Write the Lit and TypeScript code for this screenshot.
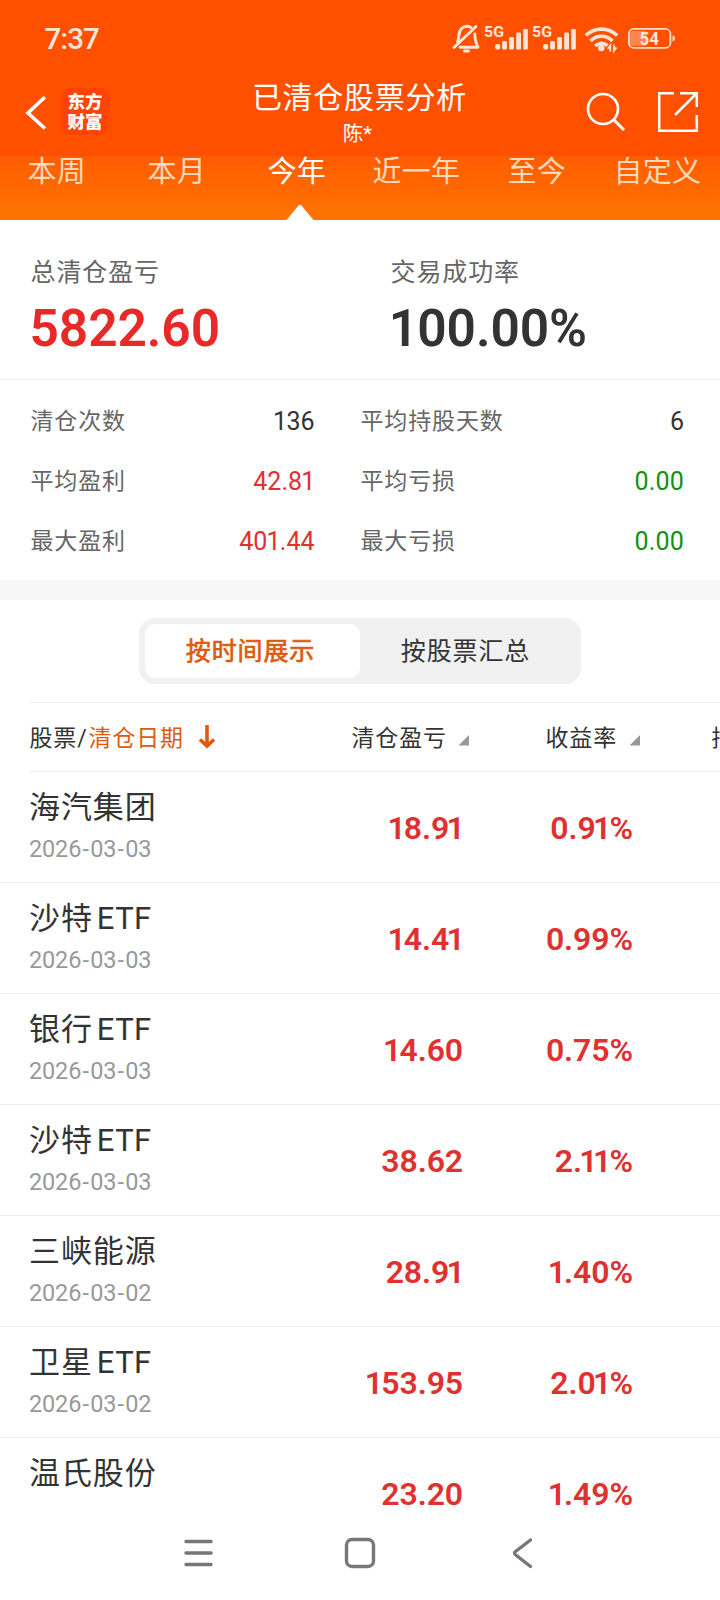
import { LitElement, html, css, svg } from "lit";
import { customElement } from "lit/decorators.js";

interface Trade { name: string; suffix?: string; date: string; profit: string; rate: string; }

const TRADES: Trade[] = [
  { name: "海汽集团", date: "2026-03-03", profit: "18.91", rate: "0.91%" },
  { name: "沙特", suffix: "ETF", date: "2026-03-03", profit: "14.41", rate: "0.99%" },
  { name: "银行", suffix: "ETF", date: "2026-03-03", profit: "14.60", rate: "0.75%" },
  { name: "沙特", suffix: "ETF", date: "2026-03-03", profit: "38.62", rate: "2.11%" },
  { name: "三峡能源", date: "2026-03-02", profit: "28.91", rate: "1.40%" },
  { name: "卫星", suffix: "ETF", date: "2026-03-02", profit: "153.95", rate: "2.01%" },
  { name: "温氏股份", date: "", profit: "23.20", rate: "1.49%" },
];

const STATS = [
  ["清仓次数", "136", "", "平均持股天数", "6", ""],
  ["平均盈利", "42.81", "up", "平均亏损", "0.00", "down"],
  ["最大盈利", "401.44", "up", "最大亏损", "0.00", "down"],
];

const TABS = ["本周", "本月", "今年", "近一年", "至今", "自定义"];

// Tightens the narrow figure "1" against its neighbours.
const figures = (text: string) =>
  [...text].map((c) => (c === "1" ? html`<span class="one">1</span>` : c));

const signal = (x: number) => svg`
  <g fill="#ffe6d8">
    <rect x=${x} y="34" width="5" height="5.6" rx="1.8"/>
    <rect x=${x + 7} y="31" width="4.8" height="8.6" rx="1.6"/>
    <rect x=${x + 14} y="27" width="4.8" height="12.6" rx="1.6"/>
    <rect x=${x + 21} y="22.5" width="4.8" height="17.1" rx="1.4"/>
    <rect x=${x + 28} y="19" width="4.6" height="20.6" rx="1"/>
  </g>`;

@customElement("app-root")
export class AppRoot extends LitElement {
  static styles = css`
    :host { display: block; width: 720px; height: 1600px; overflow: hidden; background: #fff;
      font-family: Roboto, "Noto Sans CJK SC", sans-serif; color: #333; }
    * { box-sizing: border-box; }
    .screen { display: flex; flex-direction: column; height: 1600px; white-space: nowrap; }
    .top { background: #ff5000; height: 156px; color: #fff; flex: none; }
    .status { height: 76px; display: flex; justify-content: space-between; padding-left: 44.5px; }
    .clock { font-size: 29.5px; line-height: 79px; font-weight: 500; color: #ffe6d8; letter-spacing: -0.9px; }
    .icons { width: 270px; height: 60px; padding-top: 10px; flex: none; }
    .icons svg { display: block; }
    .bar { height: 80px; display: grid; grid-template-columns: 240px 1fr 240px; }
    .left { display: flex; align-items: flex-start; padding: 12px 0 0 24px; }
    .back { margin: 7px 0 0 0; }
    .logo { margin-left: 13px; width: 48px; height: 47px; border-radius: 9px; background: #ff4405; padding: 3px 0 0 6.5px;
      font: 900 17.5px/20px "Noto Sans CJK SC", sans-serif; }
    .titles { display: flex; flex-direction: column; align-items: center; }
    .title { font-size: 30px; letter-spacing: 0.75px; line-height: 44px; margin-left: -1px; }
    .user { font-size: 20.5px; line-height: 26px; margin: 1px 5px 0 0; }
    .right { padding: 14px 0 0 106px; }
    .tabs { flex: none; height: 64px; background: linear-gradient(#ff5c00, #ff7400); position: relative;
      display: grid; grid-template-columns: 120px 120px 105px 135px 106px auto; padding: 1px 0 0 27.5px;
      font-size: 29px; letter-spacing: 0.2px; line-height: 30px; color: #ffd9b8; }
    .active { color: #fff; }
    .pointer { position: absolute; left: 286px; bottom: 0; }
    .summary { flex: none; height: 160px; border-bottom: 1px solid #ececec; display: grid;
      grid-template-columns: 360px 360px; padding: 34px 0 0 30.5px; }
    .caption { font-size: 25px; letter-spacing: 0.9px; line-height: 38px; color: #666; }
    .big { font-size: 51.5px; line-height: 73px; font-weight: 600; letter-spacing: -0.1px; margin-left: -1px; }
    .big.total { color: #e92828; }
    .stats { flex: none; height: 200px; padding: 12px 36px 0 30.5px; display: flex; flex-direction: column; }
    .stat-row { height: 60px; display: grid; grid-template-columns: 284px 1fr; column-gap: 46px; }
    .stat { display: flex; justify-content: space-between; line-height: 60px; color: #666; font-size: 23px; letter-spacing: 0.85px; }
    .num { font-size: 25px; color: #333; letter-spacing: 0; }
    .up { color: #e03030; }
    .down { color: #109010; letter-spacing: 0.2px; }
    .gap { flex: none; height: 20px; background: #f7f7f7; }
    .switch { flex: none; width: 442px; height: 66px; margin: 18px 0 0 139px; border-radius: 16px; background: #f1f1f1;
      padding: 6px; display: grid; grid-template-columns: 215px 1fr; }
    .choice { text-align: center; font-size: 25px; letter-spacing: 0.85px; line-height: 55px; height: 54px; border-radius: 11px; }
    .choice:last-child { padding-right: 4px; }
    .chosen { background: #fff; color: #df5a0c; -webkit-text-stroke: 0.7px #df5a0c; padding-right: 4px; }
    .head { flex: none; height: 70px; margin: 18px 0 0 29px; border-top: 1px solid #ececec; border-bottom: 1px solid #ececec;
      display: grid; grid-template-columns: 322.5px 194px 166px 120px; line-height: 70px; font-size: 23px; letter-spacing: 0.85px; overflow: hidden; }
    .cell { display: flex; align-items: center; height: 70px; padding-top: 1px; }
    .cell:first-child { padding-left: 0.5px; }
    .sorted { color: #df5a0c; margin-left: 1px; }
    .arrow { margin: -5px 0 0 14px; }
    .sort { margin: 2px 0 0 11.5px; }
    .rows { flex: 1; min-height: 0; overflow: hidden; }
    .row { height: 111px; border-bottom: 1px solid #ececec; display: grid; grid-template-columns: 300px 134px 170px; padding-left: 29px; }
    .row:last-child { height: 82px; border-bottom: 0; }
    .name { font-size: 31px; letter-spacing: 0.9px; line-height: 46px; margin-top: 13px; }
    .suffix { margin-left: 4px; letter-spacing: 0.4px; }
    .date { font-size: 23.5px; line-height: 30px; color: #999; margin-top: 3px; letter-spacing: -0.15px; }
    .dash { margin: 0 1.3px; }
    .value { font-size: 32px; font-weight: 600; line-height: 113px; height: 82px; text-align: right; color: #e03030; letter-spacing: -0.1px; }
    .value .one { margin: 0 -1.8px 0 -2.6px; }
    .one { margin: 0 -0.8px; }
    .nav { flex: none; height: 80px; background: #fff; }
    .nav svg { display: block; }
  `;

  render() {
    return html`<div class="screen">
      <header class="top">
        <div class="status">
          <div class="clock">7:37</div>
          <div class="icons">
            <svg width="260" height="50" viewBox="0 10 260 50">
              <g transform="translate(-3 0)" fill="none" stroke="#ffe6d8" stroke-width="2.9" stroke-linejoin="round" stroke-linecap="round">
                <path d="M7 47.5 L29 26.5"/>
                <path d="M10.5 42 C13 38 10 29.5 17 26.8 C20 25.8 22 26.2 24 27.5"/>
                <path d="M27.8 34 C28 41 28.5 43 31 47.3 H13"/>
                <path d="M17.5 51 H21.5"/>
              </g>
              <g fill="#ffe6d8" font-family="Roboto, sans-serif" font-weight="700">
                <text x="34" y="37" font-size="15.5" textLength="20" lengthAdjust="spacingAndGlyphs">5G</text>
                <text x="82" y="37" font-size="15.5" textLength="20" lengthAdjust="spacingAndGlyphs">5G</text>
              </g>
              <g transform="translate(0 10)">${signal(45.2)}${signal(93.2)}</g>
              <g fill="none" stroke="#ffe6d8" stroke-width="3.6">
                <path d="M135.8 35.5 A22.5 22.5 0 0 1 167.2 35.5"/>
                <path d="M140.6 41 A15 15 0 0 1 162.4 41"/>
                <path d="M145.2 46 A8.6 8.6 0 0 1 157.4 45.6"/>
              </g>
              <circle cx="151.3" cy="48" r="3.2" fill="#ffe6d8"/>
              <path d="M160.3 51.5 V45.5 L157.8 48.8 M164 44.5 V50.8 L166.5 47.4" fill="none" stroke="#ffe6d8" stroke-width="1.8"/>
              <rect x="180" y="31" width="17" height="15" rx="3" fill="#ff8350"/>
              <rect x="178.9" y="28.9" width="41.5" height="19" rx="5" fill="none" stroke="#ffdcc8" stroke-width="1.9"/>
              <path d="M222.5 35.5 Q225 35.5 225 38.3 Q225 41.2 222.5 41.2 Z" fill="#ffdcc8"/>
              <text x="189.5" y="45" font-size="18.5" font-family="Roboto, sans-serif" font-weight="700" fill="#ffe6d8" textLength="19.5" lengthAdjust="spacingAndGlyphs">54</text>
            </svg>
          </div>
        </div>
        <div class="bar">
          <div class="left">
            <svg class="back" width="24" height="36" viewBox="0 0 24 36"><path d="M21 2 L4 18 L21 33.5" fill="none" stroke="#fff" stroke-width="3.6"/></svg>
            <div class="logo">东方<br />财富</div>
          </div>
          <div class="titles"><div class="title">已清仓股票分析</div><div class="user">陈*</div></div>
          <div class="right">
            <svg width="120" height="44" viewBox="586 90 120 44" fill="none" stroke="#fff">
              <circle cx="603" cy="109" r="15" stroke-width="2.7"/>
              <path d="M613.5 119.5 L624 130" stroke-width="3"/>
              <path d="M674 93.2 H659.2 V130.8 H696.8 V115 M680 93.2 H696.8 V107 M696 94 L675 115" stroke-width="2.5"/>
            </svg>
          </div>
        </div>
      </header>
      <nav class="tabs">
        ${TABS.map((t, i) => html`<span class="tab ${i === 2 ? "active" : ""}">${t}</span>`)}
        <svg class="pointer" width="28" height="16"><path d="M0.5 16 L12.5 1.5 Q14 0 15.5 1.5 L27.5 16 Z" fill="#fff"/></svg>
      </nav>
      <section class="summary">
        <div><div class="caption">总清仓盈亏</div><div class="big total">5822.60</div></div>
        <div><div class="caption">交易成功率</div><div class="big">${figures("100.00%")}</div></div>
      </section>
      <section class="stats">
        ${STATS.map(([a, av, ac, b, bv, bc]) => html`<div class="stat-row">
          <div class="stat"><span>${a}</span><span class="num ${ac}">${figures(av)}</span></div>
          <div class="stat"><span>${b}</span><span class="num ${bc}">${bv}</span></div>
        </div>`)}
      </section>
      <div class="gap"></div>
      <div class="switch"><div class="choice chosen">按时间展示</div><div class="choice">按股票汇总</div></div>
      <div class="head">
        <div class="cell">股票/<span class="sorted">清仓日期</span>
          <svg class="arrow" width="18" height="25" viewBox="0 0 18 25"><path d="M9 1 V22 M2 15.5 L9 22 L16 15.5" fill="none" stroke="#e45708" stroke-width="3.6"/></svg></div>
        <div class="cell">清仓盈亏${this.sortMark()}</div>
        <div class="cell">收益率${this.sortMark()}</div>
        <div class="cell">持股天数</div>
      </div>
      <div class="rows">
        ${TRADES.map((t) => html`<div class="row">
          <div>
            <div class="name">${t.name}${t.suffix ? html`<span class="suffix">${t.suffix}</span>` : ""}</div>
            <div class="date">${t.date.split("-").map((p, i) => html`${i ? html`<span class="dash">-</span>` : ""}${p}`)}</div>
          </div>
          <div class="value">${figures(t.profit)}</div>
          <div class="value">${figures(t.rate)}</div>
        </div>`)}
      </div>
      <footer class="nav">
        <svg width="720" height="80" viewBox="0 1520 720 80" fill="none" stroke="#777" stroke-width="3.4" stroke-linecap="round">
          <path d="M186 1541.5 H211 M186 1553 H211 M186 1564.5 H211"/>
          <rect x="346.5" y="1539.5" width="27" height="27" rx="5.5"/>
          <path d="M530.5 1540 L515.5 1551.5 Q513.5 1553 515.5 1554.8 L530.5 1566.5"/>
        </svg>
      </footer>
    </div>`;
  }

  private sortMark() {
    return html`<svg class="sort" width="12" height="12"><path d="M0.5 11.5 L11 1 V11.5 Z" fill="#999"/></svg>`;
  }
}
